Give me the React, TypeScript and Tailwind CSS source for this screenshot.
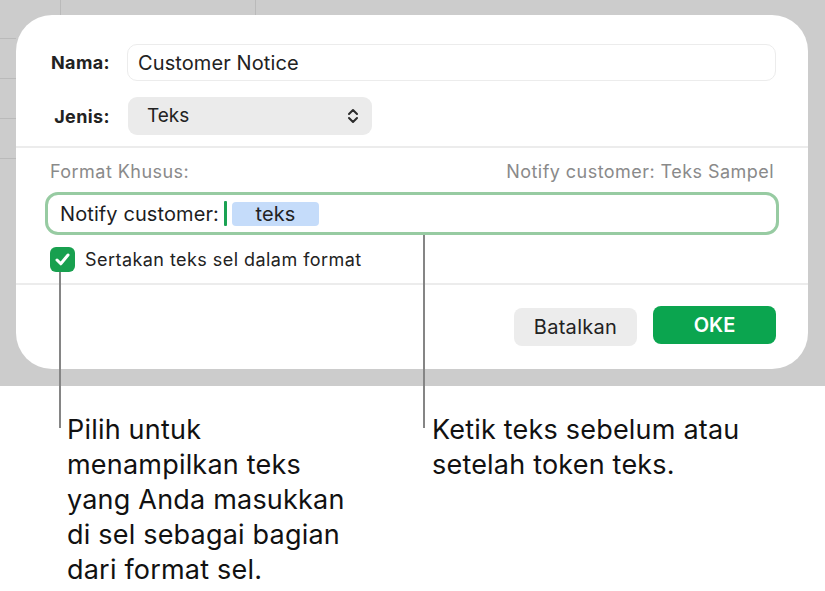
import React from 'react'

const ChevronUpDown = () => (
    <svg width="14" height="20" viewBox="0 0 14 20" fill="none">
        <path d="M3 8 L7 4 L11 8" stroke="#2b2b2b" strokeWidth="2" strokeLinecap="round" strokeLinejoin="round" />
        <path d="M3 12 L7 16 L11 12" stroke="#2b2b2b" strokeWidth="2" strokeLinecap="round" strokeLinejoin="round" />
    </svg>
)

const Check = () => (
    <svg width="19" height="19" viewBox="0 0 19 19" fill="none">
        <path d="M4 10 L7.8 13.8 L15 5" stroke="white" strokeWidth="3" strokeLinecap="round" strokeLinejoin="round" />
    </svg>
)

const App = () => {
    return (
        <div className="relative w-[825px] h-[591px] bg-white overflow-hidden font-['Inter',sans-serif] text-[#1d1d1f]">
            {/* spreadsheet behind the dialog */}
            <div className="relative h-[386px] bg-[#cccccc] pt-[15px] pl-[16px]">
                <div className="absolute left-[60px] top-0 h-[15px] w-px bg-[#bababa]"></div>
                <div className="absolute left-[255px] top-0 h-[15px] w-px bg-[#bababa]"></div>
                <div className="absolute left-0 top-[38px] w-[16px] h-px bg-[#bababa]"></div>
                <div className="absolute left-0 top-[78px] w-[16px] h-px bg-[#bababa]"></div>
                <div className="absolute left-0 top-[118px] w-[16px] h-px bg-[#bababa]"></div>
                <div className="absolute left-0 top-[158px] w-[16px] h-px bg-[#bababa]"></div>

                <div className="relative w-[792px] h-[354px] rounded-[36px] bg-white">
                    <div className="px-[32px] pt-[29px] pb-[11px]">
                        <div className="flex items-center gap-[17px]">
                            <span className="w-[62px] text-right text-[18px] tracking-[0.4px] font-bold text-[#222]">Nama:</span>
                            <div className="flex-1 h-[37px] flex items-center border border-[#ececec] rounded-[10px] pl-[10px] text-[20px] tracking-[0.1px] text-[#222]">
                                Customer Notice
                            </div>
                        </div>
                        <div className="flex items-center gap-[18px] mt-[16px]">
                            <span className="w-[62px] text-right text-[18px] tracking-[0.4px] font-bold text-[#222]">Jenis:</span>
                            <div className="w-[244px] h-[38px] flex items-center justify-between bg-[#ebebeb] rounded-[9px] pl-[19px] pr-[12px] text-[19px] text-[#222]">
                                <span>Teks</span>
                                <ChevronUpDown />
                            </div>
                        </div>
                    </div>

                    <div className="h-[2px] bg-[#ececec]"></div>

                    <div className="px-[29px] pt-[14px] pb-[11px]">
                        <div className="flex justify-between px-[5px] text-[18px] tracking-[0.45px] leading-[20px] text-[#8a8a8a]">
                            <span>Format Khusus:</span>
                            <span>Notify customer: Teks Sampel</span>
                        </div>
                        <div className="mt-[10px] h-[43px] flex items-center border-[3px] border-[#97cba2] rounded-[13px] pl-[12px] text-[20px] tracking-[0.1px] text-[#1d1d1f]">
                            <span>Notify customer:</span>
                            <span className="ml-[5px] w-[3px] h-[25px] bg-[#1aa253] rounded-[1px]"></span>
                            <span className="ml-[5px] w-[87px] h-[24px] flex items-center justify-center bg-[#c5dcfa] rounded-[4px] text-[#222]">teks</span>
                        </div>
                        <div className="flex items-center gap-[10px] mt-[12px] px-[5px]">
                            <div className="w-[25px] h-[25px] rounded-[6px] bg-[#18a04f] flex items-center justify-center">
                                <Check />
                            </div>
                            <span className="text-[18px] leading-[25px] tracking-[0.45px] text-[#222]">Sertakan teks sel dalam format</span>
                        </div>
                    </div>

                    <div className="h-[2px] bg-[#ececec]"></div>

                    <div className="flex justify-end items-start gap-[16px] px-[32px] pt-[21px]">
                        <button className="mt-[2px] w-[123px] h-[38px] rounded-[8px] bg-[#ececec] text-[20px] tracking-[0.3px] text-[#222]">Batalkan</button>
                        <button className="w-[123px] h-[38px] rounded-[8px] bg-[#0ba54f] text-[20px] font-semibold text-white">OKE</button>
                    </div>
                </div>
            </div>

            {/* callout lines */}
            <div className="absolute left-[59px] top-[272px] w-[2px] h-[156px] bg-[#858585]"></div>
            <div className="absolute left-[423px] top-[235px] w-[2px] h-[193px] bg-[#858585]"></div>

            <div className="flex mt-[26px] text-[27px] tracking-[0.2px] leading-[35px] text-[#111]">
                <p className="ml-[67px] w-[365px]">
                    Pilih untuk<br />menampilkan teks<br />yang Anda masukkan<br />di sel sebagai bagian<br />dari format sel.
                </p>
                <p>
                    Ketik teks sebelum atau<br />setelah token teks.
                </p>
            </div>
        </div>
    )
}

export default App
